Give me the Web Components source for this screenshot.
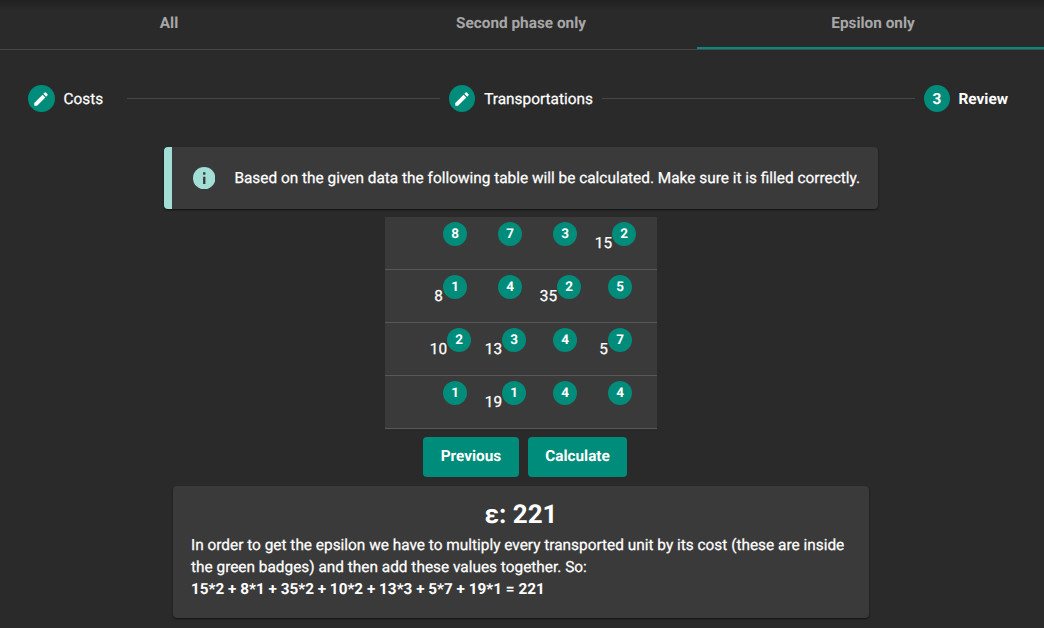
<!DOCTYPE html>
<html lang="en">
<head>
<meta charset="utf-8">
<title>Epsilon</title>
<style>
html, body { margin: 0; height: 100%; }
body { background: #2a2a2a; color: #fff; font: 400 15.4px/22px Roboto, sans-serif; text-rendering: geometricPrecision; -webkit-text-stroke: 0.25px currentColor; overflow: hidden; }
</style>
</head>
<body>
<epsilon-page></epsilon-page>
<script>
function define(name, html, setup) {
  const template = document.createElement('template');
  template.innerHTML = html;
  customElements.define(name, class extends HTMLElement {
    connectedCallback() {
      if (this.shadowRoot) return;
      this.attachShadow({ mode: 'open' }).append(template.content.cloneNode(true));
      if (setup) setup(this, this.shadowRoot);
    }
  });
}

define('tab-item', `<style>
  :host { display: flex; box-sizing: border-box; height: 49px; padding-bottom: 4px; align-items: center; justify-content: center; color: #a7a7a7; font-size: 15.35px; font-weight: 700; -webkit-text-stroke: 0; }
  :host([active]) { border-bottom: 2px solid #008c7a; padding-bottom: 2px; }
</style><slot></slot>`);

define('tab-bar', `<style>
  :host { display: grid; grid-template-columns: repeat(3, 352px); margin-left: -7px; border-bottom: 1px solid #474747; background: linear-gradient(#202020, #2a2a2a 10px); }
</style><slot></slot>`);

define('step-item', `<style>
  :host { display: flex; align-items: center; white-space: nowrap; }
  :host([number]) { font-weight: 700; -webkit-text-stroke: 0; }
  .dot { flex: none; width: 26.5px; height: 27px; border-radius: 50%; background: #008c7a; display: flex; align-items: center; justify-content: center; margin-right: 9px; }
  :host([number]) .dot { width: 26px; margin-right: 8.5px; }
  svg { width: 18px; height: 18px; fill: #fff; }
</style><span class="dot"></span><slot></slot>`, (host, root) => {
  root.querySelector('.dot').innerHTML = host.getAttribute('number') ||
    '<svg viewBox="0 0 24 24"><path d="M20.71 7.04c.39-.39.39-1.04 0-1.41l-2.34-2.34c-.37-.39-1.02-.39-1.41 0l-1.84 1.83 3.75 3.75M3 17.25V21h3.75L17.81 9.93l-3.75-3.75L3 17.25z"/></svg>';
});

define('step-bar', `<style>
  :host { display: grid; grid-template-columns: 99px 313px 9px 153px 313px 9px auto; justify-content: start; align-items: center; height: 27px; padding-left: 28px; margin-top: 35px; }
  i { height: 1px; background: #474747; }
  .a { grid-column: 2; }
  ::slotted([slot="second"]) { grid-column: 4; margin-left: -0.3px; }
  .b { grid-column: 5; }
  ::slotted([slot="third"]) { grid-column: 7; }
</style><slot name="first"></slot><i class="a"></i><slot name="second"></slot><i class="b"></i><slot name="third"></slot>`);

define('info-alert', `<style>
  :host { display: flex; box-sizing: border-box; align-items: center; width: 714px; height: 62px; margin: 35px 0 0 164px; padding-left: 20.5px; border-left: 8px solid #a2ddd6; border-radius: 4px; background: #3a3a3a; box-shadow: 0 1px 2px #0009; white-space: nowrap; }
  svg { width: 22.4px; height: 22.4px; margin-right: 19.5px; }
</style><svg viewBox="0 0 22 22"><circle cx="11" cy="11" r="11" fill="#a2ddd6"/><path fill="#3a3a3a" d="M9.9 5.2h2.3v2.3H9.9zM9.9 9.6h2.3v7H9.9z"/></svg><slot></slot>`);

define('cost-cell', `<style>
  :host { display: flex; justify-content: center; align-items: flex-start; }
  .amount { min-width: 9px; text-align: right; line-height: 22px; margin-top: 15px; }
  .badge { width: 24px; height: 24px; margin-top: 5px; border-radius: 50%; background: #008c7a; font-size: 13.5px; font-weight: 700; line-height: 24px; text-align: center; -webkit-text-stroke: 0; }
</style><span class="amount"><slot></slot></span><span class="badge"></span>`, (host, root) => {
  root.querySelector('.badge').textContent = host.getAttribute('cost');
});

define('cost-table', `<style>
  :host { display: block; width: 272px; margin: 8px 0 0 385px; background: #3a3a3a; }
  .row { display: grid; grid-template-columns: repeat(4, 55px); height: 52px; padding-left: 38px; border-bottom: 1px solid #585858; }
</style>`, (host, root) => {
  const rows = [['8', '7', '3', '2:15'], ['1:8', '4', '2:35', '5'], ['2:10', '3:13', '4', '7:5'], ['1', '1:19', '4', '4']];
  for (const cells of rows) {
    const row = document.createElement('div');
    row.className = 'row';
    for (const value of cells) {
      const [cost, amount = ''] = value.split(':');
      const cell = document.createElement('cost-cell');
      cell.setAttribute('cost', cost);
      cell.textContent = amount;
      row.append(cell);
    }
    root.append(row);
  }
});

define('teal-button', `<style>
  :host { display: block; flex: none; }
  button { display: block; width: 100%; height: 40px; padding: 0 0 2px; border: 0; border-radius: 4px; background: #008c7a; color: #fff; font: 700 15.35px/20px Roboto, sans-serif; text-rendering: inherit; -webkit-text-stroke: 0; }
</style><button><slot></slot></button>`);

define('result-card', `<style>
  :host { display: block; box-sizing: border-box; width: 696px; height: 132px; margin: 9px 0 0 173px; padding: 13px 18px; border-radius: 4px; background: #3a3a3a; box-shadow: 0 1px 2px #0009; }
  h1 { margin: 0 0 3px; text-align: center; font-size: 26px; line-height: 32px; font-weight: 700; -webkit-text-stroke: 0; }
  p { margin: 0; white-space: nowrap; }
  .sum { font-weight: 700; font-size: 15.3px; -webkit-text-stroke: 0; }
</style><h1>ε: 221</h1>
<p>In order to get the epsilon we have to multiply every transported unit by its cost (these are inside<br>the green badges) and then add these values together. So:</p>
<p class="sum">15*2 + 8*1 + 35*2 + 10*2 + 13*3 + 5*7 + 19*1 = 221</p>`);

define('epsilon-page', `<style>
  :host { display: block; height: 628px; overflow: hidden; }
  .actions { display: flex; gap: 9px; margin: 8px 0 0 423px; }
</style>
<tab-bar><tab-item>All</tab-item><tab-item>Second phase only</tab-item><tab-item active>Epsilon only</tab-item></tab-bar>
<step-bar><step-item slot="first">Costs</step-item><step-item slot="second">Transportations</step-item><step-item slot="third" number="3">Review</step-item></step-bar>
<info-alert>Based on the given data the following table will be calculated. Make sure it is filled correctly.</info-alert>
<cost-table></cost-table>
<div class="actions"><teal-button style="width:96px">Previous</teal-button><teal-button style="width:99px">Calculate</teal-button></div>
<result-card></result-card>`);
</script>
</body>
</html>
